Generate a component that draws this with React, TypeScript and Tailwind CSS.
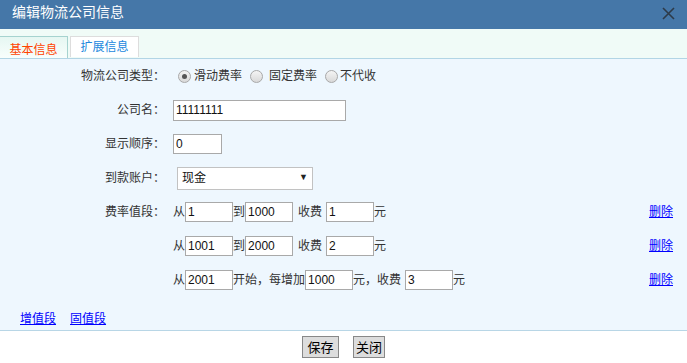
import { useState } from "react";

const font = "font-['Liberation_Sans','Noto_Sans_CJK_SC',sans-serif]";

type Seg = { from: string; to: string; fee: string };

function Radio({ checked, label, gap = "ml-[3px]" }: { checked?: boolean; label: string; gap?: string }) {
  return (
    <label className="flex items-center">
      <span className="w-[13px] h-[13px] rounded-full border border-[#a8a8a8] bg-gradient-to-b from-[#f4f4f4] to-[#d9d9d9] flex items-center justify-center">
        {checked && <span className="w-[5px] h-[5px] rounded-full bg-[#555]" />}
      </span>
      <span className={gap}>{label}</span>
    </label>
  );
}

function Box({ value, w = "w-[48px]" }: { value: string; w?: string }) {
  return (
    <input
      defaultValue={value}
      className={`${w} h-[20px] border border-[#a9a9a9] bg-white px-[2px] text-[12px] text-[#111] outline-none`}
    />
  );
}

export default function App() {
  const [segs] = useState<Seg[]>([
    { from: "1", to: "1000", fee: "1" },
    { from: "1001", to: "2000", fee: "2" },
  ]);

  return (
    <div className={`w-[687px] h-[363px] flex flex-col bg-white text-[12px] text-[#333] ${font}`}>
      {/* title bar */}
      <div className="h-[29px] bg-[#4577a8] flex items-center justify-between pl-[12px] pr-[12px]">
        <span className="text-white text-[14px] -mt-[4px]">编辑物流公司信息</span>
        <svg width="13" height="13" viewBox="0 0 13 13" className="-mt-[2px]">
          <path d="M1 1L12 12M12 1L1 12" stroke="#2d3a48" strokeWidth="1.6" />
        </svg>
      </div>

      {/* tabs */}
      <div className="h-[30px] bg-[#f0fbf7] border-b border-[#b2d5e5] flex items-end">
        <div className="w-[68px] h-[22px] border-t border-r border-[#a6d3cf] bg-gradient-to-b from-[#e6f7f2] to-[#f8fefc] flex items-end justify-center text-[#ff4400] text-[12px] leading-[15px]">
          <span>基本信息</span>
        </div>
        <div className="ml-[2px] mb-[1px] w-[69px] h-[21px] border border-b-0 border-[#dddddd] bg-white flex items-center justify-center text-[#2288dd] text-[12px]">
          扩展信息
        </div>
      </div>

      {/* form */}
      <div className="flex-1 bg-[#eef7fe] flex flex-col">
        <div className="h-[34px] flex items-center">
          <div className="w-[165px] text-right">物流公司类型：</div>
          <div className="ml-[13px] flex items-center gap-[8px]">
            <Radio checked label="滑动费率" />
            <Radio label="固定费率" gap="ml-[6px]" />
            <Radio label="不代收" gap="ml-[2px]" />
          </div>
        </div>

        <div className="h-[34px] flex items-center">
          <div className="w-[165px] text-right">公司名：</div>
          <input
            defaultValue="11111111"
            className="ml-[8px] w-[173px] h-[21px] border border-[#a9a9a9] bg-white px-[2px] text-[12px] text-[#111] outline-none"
          />
        </div>

        <div className="h-[34px] flex items-center">
          <div className="w-[165px] text-right">显示顺序：</div>
          <input
            defaultValue="0"
            className="ml-[8px] w-[49px] h-[20px] border border-[#a9a9a9] bg-white px-[2px] text-[12px] text-[#111] outline-none"
          />
        </div>

        <div className="h-[34px] flex items-center">
          <div className="w-[165px] text-right">到款账户：</div>
          <div className="ml-[12px] w-[136px] h-[23px] border border-[#c2c2c2] bg-white flex items-center justify-between pl-[4px] pr-[4px] text-[#111]">
            <span>现金</span>
            <span className="text-[9px] text-[#222]">▼</span>
          </div>
        </div>

        {segs.map((s, i) => (
          <div key={i} className="h-[34px] flex items-center">
            <div className="w-[165px] text-right">{i === 0 ? "费率值段：" : ""}</div>
            <div className="ml-[8px] flex items-center">
              <span>从</span>
              <Box value={s.from} />
              <span>到</span>
              <Box value={s.to} />
              <span className="ml-[5px] mr-[4px]">收费</span>
              <Box value={s.fee} />
              <span>元</span>
            </div>
            <a href="#" className="ml-auto mr-[14px] text-[#0000ff] underline">
              删除
            </a>
          </div>
        ))}

        <div className="h-[34px] flex items-center">
          <div className="w-[165px]" />
          <div className="ml-[8px] flex items-center">
            <span>从</span>
            <Box value="2001" />
            <span>开始，每增加</span>
            <Box value="1000" />
            <span className="mr-[4px]">元，收费</span>
            <Box value="3" />
            <span>元</span>
          </div>
          <a href="#" className="ml-auto mr-[14px] text-[#0000ff] underline">
            删除
          </a>
        </div>

        <div className="mt-auto mb-[2px] flex gap-[14px] pl-[20px]">
          <a href="#" className="text-[#0000ff] underline">增值段</a>
          <a href="#" className="text-[#0000ff] underline">固值段</a>
        </div>
      </div>

      {/* footer */}
      <div className="h-[33px] border-t border-[#b8d6e6] bg-white flex items-start justify-center gap-[14px] pt-[5px]">
        <button className="w-[37px] h-[22px] border border-[#888] bg-[#dddddd] text-[13px] text-black leading-none">保存</button>
        <button className="w-[32px] h-[22px] border border-[#888] bg-[#dddddd] text-[13px] text-black leading-none">关闭</button>
      </div>
    </div>
  );
}
